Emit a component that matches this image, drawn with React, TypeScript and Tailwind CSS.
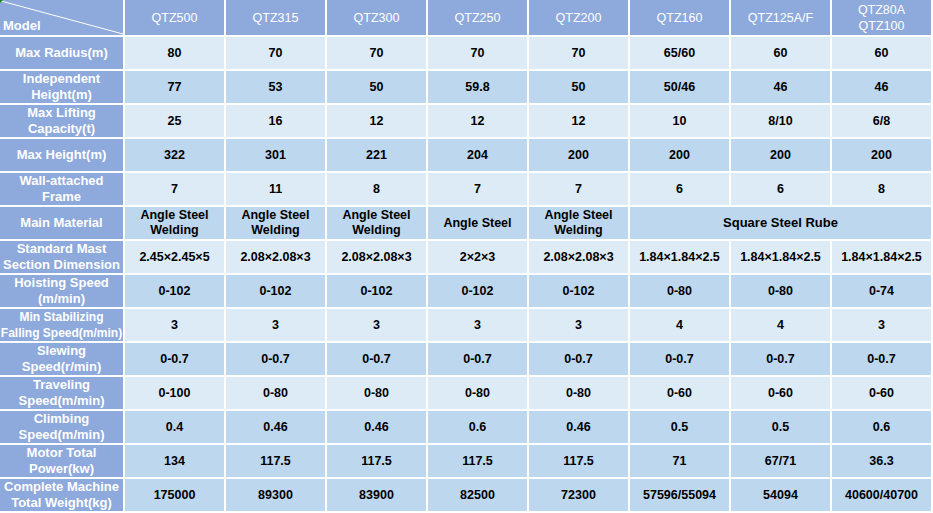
import React from "react";

const models = ["QTZ500", "QTZ315", "QTZ300", "QTZ250", "QTZ200", "QTZ160", "QTZ125A/F", "QTZ80A\nQTZ100"];

type Row = { label: string; small?: boolean; dark: boolean; values: (string | null)[] };

const rows: Row[] = [
  { label: "Max Radius(m)", dark: false, values: ["80", "70", "70", "70", "70", "65/60", "60", "60"] },
  { label: "Independent\nHeight(m)", dark: true, values: ["77", "53", "50", "59.8", "50", "50/46", "46", "46"] },
  { label: "Max Lifting\nCapacity(t)", dark: false, values: ["25", "16", "12", "12", "12", "10", "8/10", "6/8"] },
  { label: "Max Height(m)", dark: true, values: ["322", "301", "221", "204", "200", "200", "200", "200"] },
  { label: "Wall-attached\nFrame", dark: false, values: ["7", "11", "8", "7", "7", "6", "6", "8"] },
  { label: "Main Material", dark: true, values: ["Angle Steel\nWelding", "Angle Steel\nWelding", "Angle Steel\nWelding", "Angle Steel", "Angle Steel\nWelding", null, null, null] },
  { label: "Standard Mast\nSection Dimension", dark: false, values: ["2.45×2.45×5", "2.08×2.08×3", "2.08×2.08×3", "2×2×3", "2.08×2.08×3", "1.84×1.84×2.5", "1.84×1.84×2.5", "1.84×1.84×2.5"] },
  { label: "Hoisting Speed\n(m/min)", dark: true, values: ["0-102", "0-102", "0-102", "0-102", "0-102", "0-80", "0-80", "0-74"] },
  { label: "Min Stabilizing\nFalling Speed(m/min)", small: true, dark: false, values: ["3", "3", "3", "3", "3", "4", "4", "3"] },
  { label: "Slewing\nSpeed(r/min)", dark: true, values: ["0-0.7", "0-0.7", "0-0.7", "0-0.7", "0-0.7", "0-0.7", "0-0.7", "0-0.7"] },
  { label: "Traveling\nSpeed(m/min)", dark: false, values: ["0-100", "0-80", "0-80", "0-80", "0-80", "0-60", "0-60", "0-60"] },
  { label: "Climbing\nSpeed(m/min)", dark: true, values: ["0.4", "0.46", "0.46", "0.6", "0.46", "0.5", "0.5", "0.6"] },
  { label: "Motor Total\nPower(kw)", dark: true, values: ["134", "117.5", "117.5", "117.5", "117.5", "71", "67/71", "36.3"] },
  { label: "Complete Machine\nTotal Weight(kg)", dark: true, values: ["175000", "89300", "83900", "82500", "72300", "57596/55094", "54094", "40600/40700"] },
];

function Lines({ text }: { text: string }) {
  const parts = text.split("\n");
  return (
    <>
      {parts.map((p, i) => (
        <span key={i} className="block">
          {p}
        </span>
      ))}
    </>
  );
}

export default function App() {
  return (
    <div
      className="w-[933px] h-[513px] bg-white overflow-hidden"
      style={{ fontFamily: '"Liberation Sans", Arial, sans-serif' }}
    >
      <div className="grid grid-cols-[123px_repeat(8,99px)] grid-rows-[35px_repeat(14,32px)] gap-[2px]">
        {/* header corner */}
        <div className="relative bg-[#8EA9DB] overflow-hidden">
          <svg className="absolute inset-0" width="123" height="35" viewBox="0 0 123 35">
            <line x1="1" y1="1" x2="123" y2="34" stroke="white" strokeWidth="1" />
            <polygon points="0,0 3,0 0,3" fill="#1a8a1a" />
          </svg>
          <span className="absolute left-[3px] bottom-[3px] text-[13px] font-bold text-white leading-none">Model</span>
        </div>
        {models.map((m) => (
          <div
            key={m}
            className="bg-[#8EA9DB] text-white text-[12.5px] leading-[16px] flex flex-col items-center justify-center text-center"
          >
            <Lines text={m} />
          </div>
        ))}

        {rows.map((r) => (
          <React.Fragment key={r.label}>
            <div
              className={`bg-[#8EA9DB] text-white font-bold flex flex-col items-center justify-center text-center whitespace-nowrap ${
                r.small ? "text-[12px] leading-[16px]" : "text-[13px] leading-[16px]"
              }`}
            >
              <Lines text={r.label} />
            </div>
            {r.values.map((v, i) => {
              if (v === null) {
                if (i === 5) {
                  return (
                    <div
                      key={i}
                      className={`col-span-3 ${r.dark ? "bg-[#BDD7EE]" : "bg-[#DDEBF7]"} text-black font-bold text-[13px] flex items-center justify-center`}
                    >
                      Square Steel Rube
                    </div>
                  );
                }
                return null;
              }
              return (
                <div
                  key={i}
                  className={`${r.dark ? "bg-[#BDD7EE]" : "bg-[#DDEBF7]"} text-black font-bold text-[12.5px] leading-[15px] flex flex-col items-center justify-center text-center whitespace-nowrap`}
                >
                  <Lines text={v} />
                </div>
              );
            })}
          </React.Fragment>
        ))}
      </div>
    </div>
  );
}
